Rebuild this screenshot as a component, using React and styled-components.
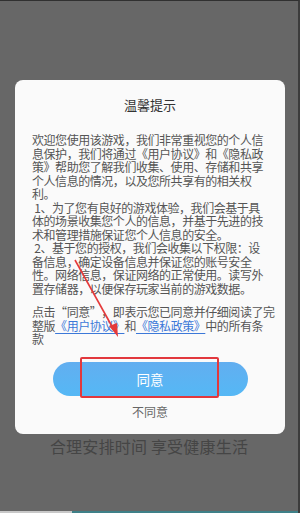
import React from 'react';
import styled, { createGlobalStyle } from 'styled-components';

const GlobalStyle = createGlobalStyle`
  html, body {
    margin: 0;
    padding: 0;
    background: #666666;
  }
  body {
    font-family: "Noto Sans CJK SC", "Noto Sans", sans-serif;
  }
`;

const intro = [
  '欢迎您使用该游戏，我们非常重视您的个人信',
  '息保护，我们将通过《用户协议》和《隐私政',
  '策》帮助您了解我们收集、使用、存储和共享',
  '个人信息的情况，以及您所共享有的相关权',
  '利。',
  ' 1、为了您有良好的游戏体验，我们会基于具',
  '体的场景收集您个人的信息，并基于先进的技',
  '术和管理措施保证您个人信息的安全。',
  ' 2、基于您的授权，我们会收集以下权限：设',
  '备信息，确定设备信息并保证您的账号安全',
  '性。网络信息，保证网络的正常使用。读写外',
  '置存储器，以便保存玩家当前的游戏数据。',
];

const Page = styled.div`
  position: relative;
  box-sizing: border-box;
  width: 300px;
  height: 513px;
  background: #676767;
  border-top: 1px solid #303030;
  border-right: 2px solid #3c3c3c;
  padding-top: 79px;
  display: flex;
  flex-direction: column;
  overflow: hidden;
`;

const Dialog = styled.section`
  box-sizing: border-box;
  width: 270px;
  margin-left: 15px;
  background: #fafafa;
  border-radius: 8px;
  padding: 16px 0 13px 17px;
  display: flex;
  flex-direction: column;
`;

const Title = styled.h2`
  margin: 0 17px 0 0;
  text-align: center;
  font-size: 13px;
  line-height: 18px;
  font-weight: 400;
  color: #333333;
`;

const Body = styled.div`
  margin-top: 19px;
  font-size: 12px;
  letter-spacing: -0.45px;
  line-height: 13.55px;
  color: #555555;
  text-spacing-trim: space-all;
`;

const Paragraph = styled.p`
  margin: ${(p) => (p.$gap ? '9.5px' : '0')} 0 0;
`;

const Line = styled.span`
  display: block;
  white-space: pre;
`;

const Link = styled.span`
  color: #3c78d8;
  text-decoration: underline;
  text-decoration-thickness: 1px;
  text-underline-offset: 2px;
`;

const Actions = styled.div`
  margin: 16px 17px 0 0;
  display: flex;
  flex-direction: column;
  align-items: center;
`;

const AgreeButton = styled.button`
  width: 195px;
  height: 34px;
  border: none;
  border-radius: 17px;
  background: linear-gradient(#62aef0, #55b8f5);
  color: #ffffff;
  font-family: inherit;
  font-size: 13.5px;
  cursor: pointer;
`;

const RejectButton = styled.button`
  margin-top: 7px;
  border: none;
  background: none;
  padding: 0;
  font-family: inherit;
  font-size: 12px;
  line-height: 18px;
  color: #666666;
`;

const Slogan = styled.div`
  margin-top: 2px;
  text-align: center;
  font-size: 16px;
  line-height: 20px;
  color: #454545;
  letter-spacing: 0.2px;
`;

const BottomStrip = styled.div`
  margin-top: auto;
  height: 2px;
  background: linear-gradient(to right, #c8c8c8 0 72px, #3f8088 72px);
`;

const Highlight = styled.div`
  position: absolute;
  left: 80px;
  top: 356px;
  width: 139px;
  height: 41px;
  box-sizing: border-box;
  border: 2px solid #e2383d;
  border-radius: 2px;
  pointer-events: none;
`;

const Arrow = styled.svg`
  position: absolute;
  left: 60px;
  top: 245px;
  pointer-events: none;
`;

export default function App() {
  return (
    <>
      <GlobalStyle />
      <Page>
        <Dialog>
          <Title>温馨提示</Title>
          <Body>
            <Paragraph>
              {intro.map((text, i) => (
                <Line key={i}>{text}</Line>
              ))}
            </Paragraph>
            <Paragraph $gap>
              <Line>点击“同意”，即表示您已同意并仔细阅读了完</Line>
              <Line>
                整版<Link>《用户协议》</Link>和<Link>《隐私政策》</Link>中的所有条
              </Line>
              <Line>款</Line>
            </Paragraph>
          </Body>
          <Actions>
            <AgreeButton>同意</AgreeButton>
            <RejectButton>不同意</RejectButton>
          </Actions>
        </Dialog>
        <Slogan>合理安排时间 享受健康生活</Slogan>
        <BottomStrip />
        <Highlight />
        <Arrow width="70" height="95" viewBox="0 0 70 95">
          <line x1="15" y1="14" x2="54" y2="84" stroke="#e53a3a" strokeWidth="1.6" />
          <polygon points="58,91 49,80 57,77" fill="#e53a3a" />
        </Arrow>
      </Page>
    </>
  );
}
